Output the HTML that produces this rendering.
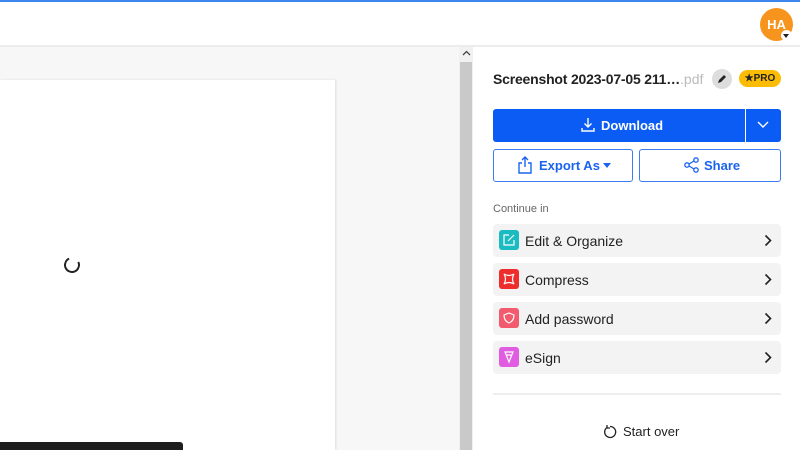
<!DOCTYPE html>
<html><head><style>
*{box-sizing:border-box;margin:0;padding:0}
body{width:800px;height:450px;overflow:hidden;background:#fff;font-family:"Liberation Sans",sans-serif;position:relative}
.abs{position:absolute}
.row{position:absolute;left:493px;width:288px;height:33px;background:#f3f3f3;border-radius:4px}
.row .ic{position:absolute;left:6px;top:6px;width:20px;height:20px;border-radius:3px}
.row .ic svg{position:absolute;left:3px;top:3px}
.row .t{position:absolute;left:32px;top:9px;font-size:14px;color:#222}
.row svg.ch{position:absolute;right:9px;top:10px}
</style></head><body>
<div class="abs" style="left:0;top:0;width:800px;height:2px;background:#3c86f0"></div>
<div class="abs" style="left:0;top:45px;width:800px;height:2px;background:#ececec"></div>
<div class="abs" style="left:0;top:47px;width:459px;height:403px;background:#f7f7f7"></div>
<div class="abs" style="left:0;top:80px;width:335px;height:370px;background:#fff;box-shadow:1px 0 2px #ddd"></div>
<div class="abs" style="left:64px;top:257px;width:16px;height:16px;border:2px solid #222;border-top-color:transparent;border-radius:50%;transform:rotate(20deg)"></div>
<div class="abs" style="left:0;top:442px;width:183px;height:8px;background:#1e1e1e;border-radius:0 3px 0 0"></div>
<div class="abs" style="left:459px;top:47px;width:14px;height:403px;background:#f1f1f1"></div>
<div class="abs" style="left:460px;top:62px;width:12px;height:388px;background:#c9c9c9"></div>
<svg class="abs" style="left:462px;top:50px" width="9" height="6" viewBox="0 0 9 6" fill="none" stroke="#444" stroke-width="1.3"><path d="M1 5l3.5-3.5L8 5"/></svg>
<div class="abs" style="left:760px;top:8px;width:33px;height:33px;border-radius:50%;background:#f7941d;color:#fff;font-weight:bold;font-size:13px;text-align:center;line-height:33px">HA</div>
<div class="abs" style="left:781px;top:30px;width:11px;height:11px;border-radius:50%;background:#fff"></div>
<div class="abs" style="left:783px;top:34px;border-left:3.5px solid transparent;border-right:3.5px solid transparent;border-top:4px solid #222"></div>

<div class="abs" style="left:493px;top:71px;font-size:14px;font-weight:bold;color:#222;letter-spacing:-0.2px;white-space:nowrap">Screenshot 2023-07-05 211…<span style="font-weight:normal;color:#bbb;font-size:14px;letter-spacing:0">.pdf</span></div>
<div class="abs" style="left:712px;top:69px;width:20px;height:20px;border-radius:50%;background:#ddd"></div>
<svg class="abs" style="left:716px;top:73px" width="12" height="12" viewBox="0 0 12 12"><path d="M2 10l1-3 5-5 2 2-5 5z" fill="#222"/></svg>
<div class="abs" style="left:739px;top:70px;width:42px;height:17px;border-radius:9px;background:#fbbc05;font-size:10px;font-weight:bold;color:#222;text-align:center;line-height:17px">★PRO</div>

<div class="abs" style="left:493px;top:109px;width:288px;height:33px;background:#0a5cf5;border-radius:3px"></div>
<div class="abs" style="left:745px;top:109px;width:1px;height:33px;background:#fff"></div>
<svg class="abs" style="left:580px;top:117px" width="16" height="16" viewBox="0 0 16 16" fill="none" stroke="#fff" stroke-width="1.4"><path d="M8 1v9M4.5 6.5 8 10l3.5-3.5M2 11v3h12v-3"/></svg>
<div class="abs" style="left:601px;top:118px;color:#fff;font-weight:bold;font-size:13px">Download</div>
<svg class="abs" style="left:756px;top:120px" width="14" height="10" viewBox="0 0 14 10" fill="none" stroke="#fff" stroke-width="1.4"><path d="M2 2l5 5 5-5"/></svg>

<div class="abs" style="left:493px;top:149px;width:140px;height:33px;border:1.5px solid #3b7cf0;border-radius:3px"></div>
<svg class="abs" style="left:517px;top:156px" width="16" height="18" viewBox="0 0 16 18" fill="none" stroke="#1a63f0" stroke-width="1.4"><path d="M8 11V1M5 4l3-3 3 3M5 7H2v10h12V7h-3"/></svg>
<div class="abs" style="left:539px;top:158px;color:#1a63f0;font-weight:bold;font-size:13px">Export As</div>
<div class="abs" style="left:603px;top:163px;border-left:4px solid transparent;border-right:4px solid transparent;border-top:5px solid #1a63f0"></div>
<div class="abs" style="left:639px;top:149px;width:142px;height:33px;border:1.5px solid #3b7cf0;border-radius:3px"></div>
<svg class="abs" style="left:684px;top:157px" width="15" height="16" viewBox="0 0 15 16" fill="none" stroke="#1a63f0" stroke-width="1.3"><circle cx="3" cy="8" r="2.2"/><circle cx="12" cy="3" r="2.2"/><circle cx="12" cy="13" r="2.2"/><path d="M5 7l5-3M5 9l5 3"/></svg>
<div class="abs" style="left:704px;top:158px;color:#1a63f0;font-weight:bold;font-size:13px">Share</div>

<div class="abs" style="left:493px;top:203px;font-size:11px;color:#666">Continue in</div>

<div class="row" style="top:224px"><div class="ic" style="background:#1bbcc1"><svg width="14" height="14" viewBox="0 0 14 14" fill="none" stroke="#fff" stroke-width="1.2"><path d="M7 2H2v10h10V7M6 8l6-6"/></svg></div><div class="t">Edit &amp; Organize</div><svg class="ch" width="8" height="13" viewBox="0 0 8 13" fill="none" stroke="#222" stroke-width="1.6"><path d="M1.5 1.5l5 5-5 5"/></svg></div>
<div class="row" style="top:263px"><div class="ic" style="background:#ee2d2d"><svg width="14" height="14" viewBox="0 0 14 14" fill="none" stroke="#fff" stroke-width="1.2"><path d="M2 2q5 3 10 0q-3 5 0 10q-5-3-10 0q3-5 0-10z"/></svg></div><div class="t">Compress</div><svg class="ch" width="8" height="13" viewBox="0 0 8 13" fill="none" stroke="#222" stroke-width="1.6"><path d="M1.5 1.5l5 5-5 5"/></svg></div>
<div class="row" style="top:302px"><div class="ic" style="background:#f25a6e"><svg width="14" height="14" viewBox="0 0 14 14" fill="none" stroke="#fff" stroke-width="1.2"><path d="M7 2l5 2q0 6-5 8q-5-2-5-8z"/></svg></div><div class="t">Add password</div><svg class="ch" width="8" height="13" viewBox="0 0 8 13" fill="none" stroke="#222" stroke-width="1.6"><path d="M1.5 1.5l5 5-5 5"/></svg></div>
<div class="row" style="top:341px"><div class="ic" style="background:#e05ce0"><svg width="14" height="14" viewBox="0 0 14 14" fill="none" stroke="#fff" stroke-width="1.2"><path d="M3 2h8l-4 10zM5 5h4"/></svg></div><div class="t">eSign</div><svg class="ch" width="8" height="13" viewBox="0 0 8 13" fill="none" stroke="#222" stroke-width="1.6"><path d="M1.5 1.5l5 5-5 5"/></svg></div>

<div class="abs" style="left:493px;top:393px;width:288px;height:2px;background:#eee"></div>
<svg class="abs" style="left:603px;top:424px" width="14" height="15" viewBox="0 0 14 15" fill="none" stroke="#222" stroke-width="1.3"><path d="M4 3.5A5.5 5.5 0 1 0 7 2.5"/><path d="M4 1v3h3" /></svg>
<div class="abs" style="left:623px;top:424px;font-size:13px;color:#222">Start over</div>
</body></html>
